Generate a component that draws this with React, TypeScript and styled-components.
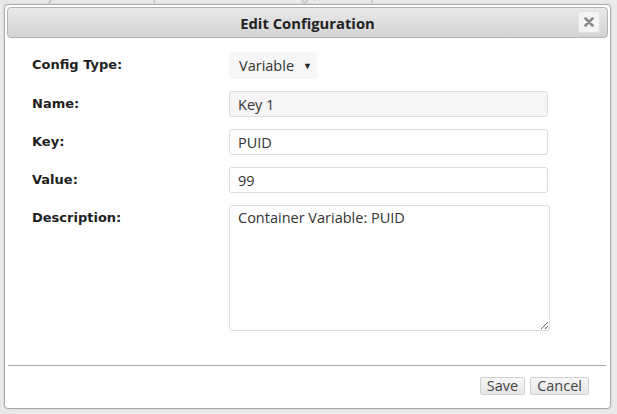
import React from 'react';
import styled, { createGlobalStyle } from 'styled-components';

const GlobalStyle = createGlobalStyle`
  html, body {
    margin: 0;
    padding: 0;
    background: #e9e9e9;
    font-family: "Open Sans", "Liberation Sans", Arial, sans-serif;
  }
`;

const Page = styled.div`
  width: 617px;
  height: 414px;
  overflow: hidden;
  box-sizing: border-box;
  padding: 4px 6px 0 4px;
  position: relative;
`;

const BehindText = styled.div`
  position: absolute;
  top: -12px;
  left: 20px;
  font-size: 11px;
  color: #b0b0b0;
  white-space: nowrap;
`;

const Dialog = styled.div`
  position: relative;
  box-sizing: border-box;
  width: 607px;
  height: 405px;
  background: #fff;
  border: 1px solid #a9a9a9;
  border-radius: 4px;
  padding: 2px;
  display: flex;
  flex-direction: column;
  box-shadow: 0 0 2px rgba(0, 0, 0, 0.15);
`;

const TitleBar = styled.div`
  box-sizing: border-box;
  height: 31px;
  border: 1px solid #b3b3b3;
  border-radius: 4px;
  background: linear-gradient(#e9e9e9, #d3d3d3);
  display: flex;
  align-items: center;
  justify-content: center;
  position: relative;
`;

const Title = styled.span`
  font-weight: 700;
  font-size: 14.8px;
  color: #222;
`;

const CloseButton = styled.button`
  position: absolute;
  right: 7px;
  top: 3px;
  width: 22px;
  height: 22px;
  border: 1px solid #e2e2e2;
  border-radius: 3px;
  background: #f4f4f4;
  padding: 0;
  display: flex;
  align-items: center;
  justify-content: center;
  cursor: pointer;
`;

const Form = styled.div`
  flex: 1;
  padding: 14px 0 0 25px;
  display: flex;
  flex-direction: column;
  gap: 12px;
`;

const Row = styled.div`
  display: grid;
  grid-template-columns: 197px 1fr;
  align-items: start;
`;

const Label = styled.label`
  font-family: "DejaVu Sans", Verdana, sans-serif;
  font-weight: 700;
  font-size: 13px;
  color: #1e1e1e;
  line-height: 26px;
`;

const Select = styled.div`
  box-sizing: border-box;
  width: 88px;
  height: 27px;
  background: #f6f6f6;
  border-radius: 3px;
  display: flex;
  align-items: center;
  padding-left: 10px;
  gap: 9px;
  font-size: 14.5px;
  color: #333;
`;

const Caret = styled.span`
  font-size: 9px;
  color: #222;
`;

const Input = styled.input<{ $readOnly?: boolean }>`
  box-sizing: border-box;
  width: 319px;
  height: 26px;
  border: 1px solid #dcdcdc;
  border-radius: 3px;
  background: ${(p) => (p.$readOnly ? '#f5f5f5' : '#fff')};
  padding: 0 8px;
  font-family: inherit;
  font-size: 14.5px;
  color: #333;
  outline: none;
`;

const TextArea = styled.textarea`
  box-sizing: border-box;
  width: 321px;
  height: 126px;
  border: 1px solid #dcdcdc;
  border-radius: 3px;
  padding: 2px 8px;
  font-family: inherit;
  font-size: 14.5px;
  color: #333;
  resize: both;
  outline: none;
  margin: 0;
`;

const Divider = styled.hr`
  border: none;
  border-top: 1px solid #a9a9a9;
  margin: 0 2px 0 1px;
`;

const Footer = styled.div`
  height: 40px;
  display: flex;
  justify-content: flex-end;
  align-items: center;
  gap: 5px;
  padding-right: 19px;
`;

const Button = styled.button<{ $minWidth?: number }>`
  height: 18px;
  min-width: ${(p) => (p.$minWidth ? `${p.$minWidth}px` : 'auto')};
  padding: 0 6px;
  border: 1px solid #d0d0d0;
  border-radius: 2px;
  background: linear-gradient(#f6f6f6, #e6e6e6);
  font-family: inherit;
  font-size: 14.5px;
  color: #444;
  line-height: 16px;
  cursor: pointer;
`;

export default function App() {
  return (
    <>
      <GlobalStyle />
      <Page>
        <BehindText>
          Here you can edit the template data for the docker image, to set the path and other variables for the container
        </BehindText>
        <Dialog>
          <TitleBar>
            <Title>Edit Configuration</Title>
            <CloseButton aria-label="close">
              <svg width="10" height="10" viewBox="0 0 10 10">
                <path d="M1.5 1.5 L8.5 8.5 M8.5 1.5 L1.5 8.5" stroke="#8a8a8a" strokeWidth="2.6" strokeLinecap="round" />
              </svg>
            </CloseButton>
          </TitleBar>
          <Form>
            <Row>
              <Label>Config Type:</Label>
              <Select>
                Variable <Caret>▼</Caret>
              </Select>
            </Row>
            <Row>
              <Label>Name:</Label>
              <Input $readOnly readOnly defaultValue="Key 1" />
            </Row>
            <Row>
              <Label>Key:</Label>
              <Input defaultValue="PUID" />
            </Row>
            <Row>
              <Label>Value:</Label>
              <Input defaultValue="99" />
            </Row>
            <Row>
              <Label>Description:</Label>
              <TextArea defaultValue="Container Variable: PUID" />
            </Row>
          </Form>
          <Divider />
          <Footer>
            <Button $minWidth={44}>Save</Button>
            <Button>Cancel</Button>
          </Footer>
        </Dialog>
      </Page>
    </>
  );
}
